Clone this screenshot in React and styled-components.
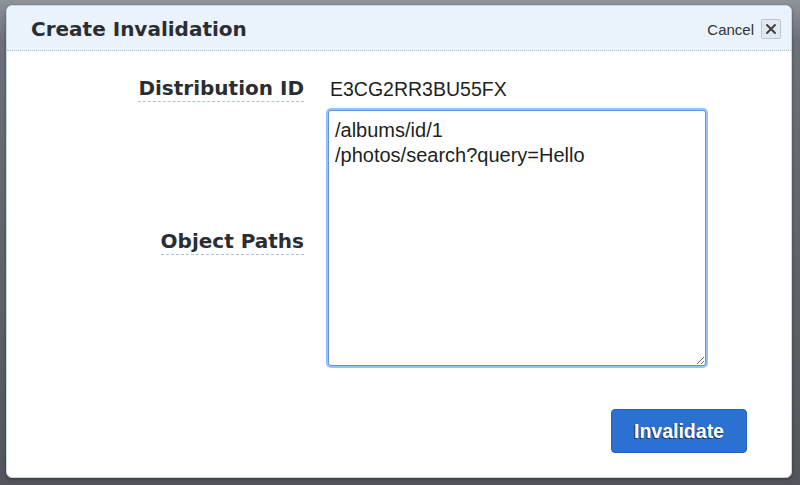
import React, { useEffect, useRef } from 'react';
import styled, { createGlobalStyle } from 'styled-components';

const GlobalStyle = createGlobalStyle`
  html, body, #root {
    margin: 0;
    padding: 0;
    width: 100%;
    height: 100%;
  }
  body {
    font-family: "Liberation Sans", Arial, sans-serif;
    overflow: hidden;
  }
`;

// backdrop behind the dialog
const Backdrop = styled.div`
  box-sizing: border-box;
  width: 800px;
  height: 485px;
  padding: 5px 8px 7px 6px;
  display: flex;
  background: linear-gradient(180deg, #8e9299 0px, #6d7078 40px, #52555c 100%);
`;

const Modal = styled.div`
  flex: 1;
  display: flex;
  flex-direction: column;
  background: #ffffff;
  border: 1px solid #c9d6e4;
  border-radius: 6px;
  overflow: hidden;
  box-shadow: 0 1px 3px rgba(0, 0, 0, 0.4);
`;

const Header = styled.div`
  height: 44px;
  flex-shrink: 0;
  display: flex;
  align-items: center;
  justify-content: space-between;
  padding: 0 10px 0 24px;
  background: #eaf2fc;
  border-bottom: 1px dotted #aebfd3;
`;

const Title = styled.h2`
  margin: 2px 0 0;
  font-family: "DejaVu Sans", Verdana, sans-serif;
  font-weight: bold;
  font-size: 20px;
  color: #2a2e33;
`;

const CancelGroup = styled.div`
  display: flex;
  align-items: center;
  gap: 7px;
  margin-top: 2px;
`;

const CancelLink = styled.span`
  font-size: 15px;
  color: #2f3338;
`;

const CloseBox = styled.button`
  width: 20px;
  height: 20px;
  padding: 0;
  display: flex;
  align-items: center;
  justify-content: center;
  background: #e2e8ef;
  border: 1px solid #bcc5cf;
  border-radius: 2px;
`;

const Body = styled.div`
  flex: 1;
  display: flex;
  flex-direction: column;
  padding: 23px 44px 0 0;
`;

const Form = styled.div`
  display: grid;
  grid-template-columns: 297px 378px;
  column-gap: 24px;
  row-gap: 6px;
  align-items: center;
`;

const LabelCell = styled.div`
  display: flex;
  justify-content: flex-end;
  padding-top: ${props => props.offset || 0}px;
`;

const Label = styled.span`
  font-family: "DejaVu Sans", Verdana, sans-serif;
  font-weight: bold;
  font-size: 20px;
  color: #2a2e33;
  padding-bottom: 1px;
  border-bottom: 1px dashed #a6c2e2;
  line-height: 24px;
`;

const Value = styled.div`
  font-size: 19.5px;
  color: #1d1f22;
  padding-left: 2px;
  line-height: 30px;
`;

const PathsInput = styled.textarea`
  box-sizing: border-box;
  width: 378px;
  height: 256px;
  margin: 0;
  padding: 7px 6px;
  font-family: "Liberation Sans", Arial, sans-serif;
  font-size: 20px;
  line-height: 25px;
  color: #1d1f22;
  border: 1px solid #5d94df;
  border-radius: 3px;
  box-shadow: 0 0 0 2px #9cc2f4;
  outline: none;
  resize: both;
  caret-color: #111;
`;

const Footer = styled.div`
  display: flex;
  justify-content: flex-end;
  margin-top: 43px;
`;

const PrimaryButton = styled.button`
  width: 136px;
  height: 44px;
  background: #2b71d1;
  border: 1px solid #2363bd;
  border-radius: 4px;
  color: #ffffff;
  font-family: "Liberation Sans", Arial, sans-serif;
  font-weight: bold;
  font-size: 19.5px;
  text-shadow: -1px 1px 0 rgba(0, 0, 0, 0.5);
  cursor: pointer;
`;

const paths = '/albums/id/1\n/photos/search?query=Hello';

export default function App() {
  const inputRef = useRef(null);

  useEffect(() => {
    const el = inputRef.current;
    if (el) {
      el.focus();
      el.setSelectionRange(paths.length, paths.length);
    }
  }, []);

  return (
    <>
      <GlobalStyle />
      <Backdrop>
        <Modal>
          <Header>
            <Title>Create Invalidation</Title>
            <CancelGroup>
              <CancelLink>Cancel</CancelLink>
              <CloseBox aria-label="Close">
                <svg width="12" height="12" viewBox="0 0 12 12">
                  <path d="M2 2 L10 10 M10 2 L2 10" stroke="#3c4045" strokeWidth="2" strokeLinecap="round" />
                </svg>
              </CloseBox>
            </CancelGroup>
          </Header>
          <Body>
            <Form>
              <LabelCell>
                <Label>Distribution ID</Label>
              </LabelCell>
              <Value>E3CG2RR3BU55FX</Value>
              <LabelCell offset={8}>
                <Label>Object Paths</Label>
              </LabelCell>
              <PathsInput ref={inputRef} defaultValue={paths} spellCheck={false} />
            </Form>
            <Footer>
              <PrimaryButton>Invalidate</PrimaryButton>
            </Footer>
          </Body>
        </Modal>
      </Backdrop>
    </>
  );
}
